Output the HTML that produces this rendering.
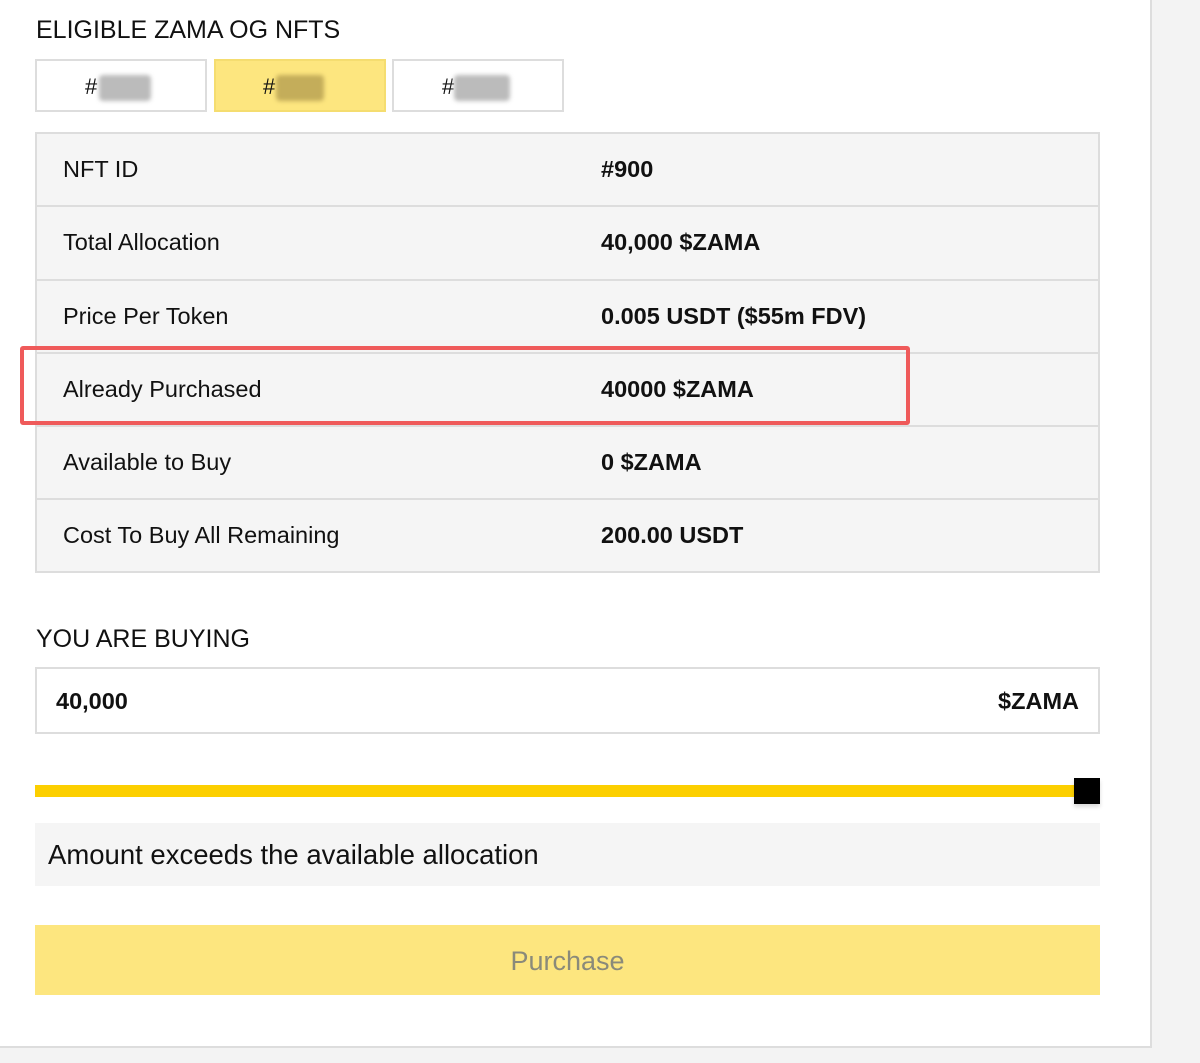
<!DOCTYPE html>
<html><head><style>
*{margin:0;padding:0;box-sizing:border-box}
body{width:1200px;height:1063px;background:#f3f3f3;font-family:"Liberation Sans",sans-serif;position:relative;overflow:hidden;color:#111}
.panel{position:absolute;left:0;top:0;width:1152px;height:1048px;background:#fff;border-right:2px solid #ddd;border-bottom:2px solid #ddd}
.h{position:absolute;left:36px;font-size:25px;color:#111}
.tab{position:absolute;top:59px;width:172px;height:53px;border:2px solid #ddd;background:#fff;font-size:22px}
.tab span{position:absolute;top:13px}
.blur{position:absolute;top:14px;height:26px;background:#bbb;filter:blur(2px);border-radius:4px}
.table{position:absolute;left:35px;top:132px;width:1065px;height:441px;border:2px solid #ddd;background:#f5f5f5}
.row{height:73.3px;border-bottom:2px solid #ddd;position:relative;font-size:23.5px}
.row:last-child{border-bottom:none}
.row .l{position:absolute;left:26px;top:22px}
.row .v{position:absolute;left:564px;top:22px;font-weight:bold}
</style></head><body>
<div class="panel"></div>
<div class="h" style="top:16px">ELIGIBLE ZAMA OG NFTS</div>
<div class="tab" style="left:35px"><span style="left:48px">#</span><div class="blur" style="left:62px;width:52px"></div></div>
<div class="tab" style="left:214px;background:#fde67f;border-color:#f5dd70"><span style="left:47px">#</span><div class="blur" style="left:60px;width:48px;background:#c4ad5a"></div></div>
<div class="tab" style="left:392px"><span style="left:48px">#</span><div class="blur" style="left:60px;width:56px"></div></div>
<div class="table">
<div class="row"><span class="l">NFT ID</span><span class="v">#900</span></div>
<div class="row"><span class="l">Total Allocation</span><span class="v">40,000 $ZAMA</span></div>
<div class="row"><span class="l">Price Per Token</span><span class="v">0.005 USDT ($55m FDV)</span></div>
<div class="row"><span class="l">Already Purchased</span><span class="v">40000 $ZAMA</span></div>
<div class="row"><span class="l">Available to Buy</span><span class="v">0 $ZAMA</span></div>
<div class="row"><span class="l">Cost To Buy All Remaining</span><span class="v">200.00 USDT</span></div>
</div>
<div style="position:absolute;left:20px;top:346px;width:890px;height:79px;border:4px solid #ef5a5a;border-radius:3px"></div>
<div class="h" style="top:625px">YOU ARE BUYING</div>
<div style="position:absolute;left:35px;top:667px;width:1065px;height:67px;border:2px solid #ddd;font-size:23.5px;font-weight:bold">
<span style="position:absolute;left:19px;top:19px">40,000</span><span style="position:absolute;right:19px;top:19px">$ZAMA</span></div>
<div style="position:absolute;left:35px;top:785px;width:1045px;height:12px;background:#fccf00"></div>
<div style="position:absolute;left:1074px;top:778px;width:26px;height:26px;background:#000;box-shadow:0 3px 4px rgba(0,0,0,.15)"></div>
<div style="position:absolute;left:35px;top:823px;width:1065px;height:63px;background:#f5f5f5;font-size:27.5px"><span style="position:absolute;left:13px;top:16px">Amount exceeds the available allocation</span></div>
<div style="position:absolute;left:35px;top:925px;width:1065px;height:70px;background:#fde67f;font-size:27px;color:#8a8a7a;text-align:center;line-height:72px">Purchase</div>
</body></html>
